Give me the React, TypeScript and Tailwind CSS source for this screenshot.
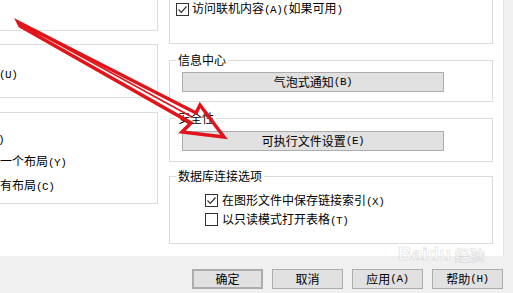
import React from 'react';

const A: React.FC<{ children: React.ReactNode }> = ({ children }) => (
  <span className="font-['Liberation_Mono',monospace] text-[11px] tracking-[-0.5px]">{children}</span>
);

const Check: React.FC<{ checked?: boolean }> = ({ checked }) => (
  <span className="flex h-[13px] w-[13px] shrink-0 items-center justify-center border border-[#333] bg-white">
    {checked && (
      <svg width="11" height="11" viewBox="0 0 11 11">
        <polyline points="1.5,5.5 4.3,8.3 9.5,2.5" fill="none" stroke="#333" strokeWidth="1.2" />
      </svg>
    )}
  </span>
);

const Btn: React.FC<{ children: React.ReactNode; className?: string }> = ({ children, className }) => (
  <div
    className={
      'flex items-center justify-center bg-[#e1e1e1] border border-[#adadad] text-black leading-[14px] ' +
      (className ?? '')
    }
  >
    {children}
  </div>
);

const App: React.FC = () => {
  return (
    <div className="relative h-[293px] w-[513px] overflow-hidden bg-[#f0f0f0] font-['Noto_Sans_CJK_SC',sans-serif] text-[12px] leading-[14px] text-black">
      {/* tab page */}
      <div className="flex h-[256px] w-[504px] border-r border-[#e3e3e3] bg-white">
        {/* left column */}
        <div className="flex w-[158px] flex-col">
          <div className="h-[31px] border-r border-b border-[#dcdcdc]" />
          <div className="mt-[13px] h-[54px] border-y border-r border-[#dcdcdc] pt-[21px]">
            <div className="-ml-px">
              <A>(U)</A>
            </div>
          </div>
          <div className="mt-[14px] h-[92px] border-y border-r border-[#dcdcdc] pt-[18px]">
            <div className="-ml-[2px]">
              <A>)</A>
            </div>
            <div className="mt-[7px]">
              一个布局<A>(Y)</A>
            </div>
            <div className="mt-[8px]">
              有布局<A>(C)</A>
            </div>
          </div>
        </div>

        {/* right column */}
        <div className="ml-[11px] flex w-[324px] flex-col">
          <div className="h-[44px] border-x border-b border-[#dcdcdc] pt-[1px] pl-[6px]">
            <div className="flex items-center gap-[3px]">
              <Check checked />
              <span>
                访问联机内容<A>(A)(</A>如果可用<A>)</A>
              </span>
            </div>
          </div>

          <fieldset className="mt-[9px] h-[49px] border border-[#dcdcdc]">
            <legend className="ml-[6px] px-[2px] leading-[14px]">信息中心</legend>
            <Btn className="mt-[5px] ml-[12px] h-[20px] w-[262px]">
              气泡式通知<A>(B)</A>
            </Btn>
          </fieldset>

          <fieldset className="mt-[9px] h-[51px] border border-[#dcdcdc]">
            <legend className="ml-[6px] px-[2px] leading-[14px]">安全性</legend>
            <Btn className="mt-[6px] ml-[12px] h-[20px] w-[262px]">
              可执行文件设置<A>(E)</A>
            </Btn>
          </fieldset>

          <fieldset className="mt-[7px] h-[75px] border border-[#dcdcdc]">
            <legend className="ml-[6px] px-[2px] leading-[14px]">数据库连接选项</legend>
            <div className="mt-[8px] ml-[35px] flex flex-col">
              <div className="flex h-[19px] items-center gap-[4px]">
                <Check checked />
                <span>
                  在图形文件中保存链接索引<A>(X)</A>
                </span>
              </div>
              <div className="flex h-[19px] items-center gap-[4px]">
                <Check />
                <span>
                  以只读模式打开表格<A>(T)</A>
                </span>
              </div>
            </div>
          </fieldset>
        </div>
      </div>

      {/* dialog buttons */}
      <div className="flex gap-[9px] pt-[13px] pl-[192px]">
        <Btn className="h-[20px] w-[71px] border-2 border-[#0078d7]">确定</Btn>
        <Btn className="h-[20px] w-[71px]">取消</Btn>
        <Btn className="h-[20px] w-[71px]">
          应用<A>(A)</A>
        </Btn>
        <Btn className="h-[20px] w-[71px]">
          帮助<A>(H)</A>
        </Btn>
      </div>

      {/* watermark */}
      <div className="pointer-events-none absolute left-[398px] top-[244px] flex items-end gap-[4px] opacity-60">
        <span className="font-['Liberation_Sans',sans-serif] text-[19px] font-bold leading-[20px] text-white [-webkit-text-stroke:0.6px_#c8c8c8]">
          Baidu
        </span>
        <span className="text-[15px] font-bold leading-[18px] text-white [-webkit-text-stroke:0.6px_#c8c8c8]">
          经验
        </span>
      </div>

      {/* red arrow annotation */}
      <svg className="pointer-events-none absolute left-0 top-0" width="513" height="293" viewBox="0 0 513 293">
        <polygon
          points="18,22 196,113 200,105 224,137 182,132 191,123 20,26"
          fill="none"
          stroke="#e0141a"
          strokeWidth="3.5"
          strokeLinejoin="miter"
        />
        <line x1="22" y1="24" x2="192" y2="117" stroke="#e0141a" strokeWidth="1.5" />
      </svg>
    </div>
  );
};

export default App;
